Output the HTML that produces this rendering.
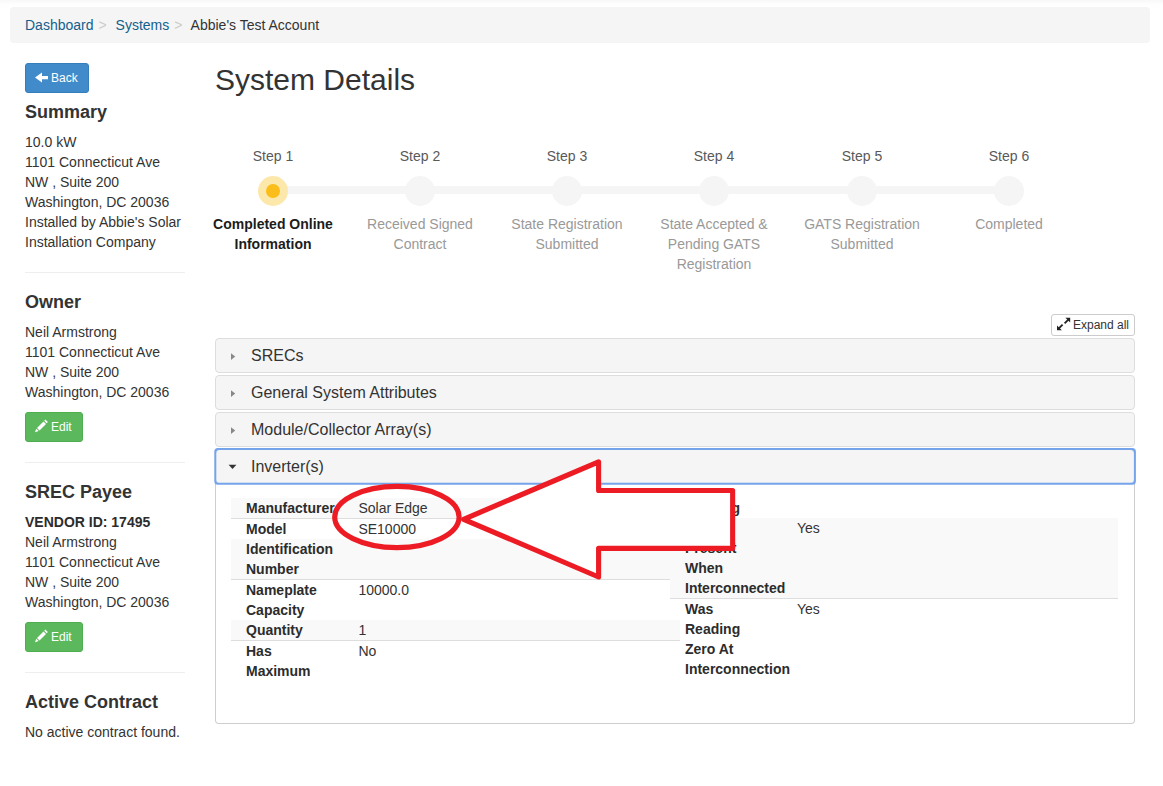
<!DOCTYPE html>
<html>
<head>
<meta charset="utf-8">
<title>System Details</title>
<style>
*{box-sizing:border-box;}
html,body{margin:0;padding:0;}
body{width:1163px;height:786px;overflow:hidden;background:#fff;font-family:"Liberation Sans",sans-serif;font-size:14px;line-height:20px;color:#333;position:relative;}
a{color:#145f8c;text-decoration:none;}
.abs{position:absolute;}
.crumb{left:10px;top:7px;width:1140px;height:36px;background:#f5f5f5;border-radius:4px;padding:8px 15px;white-space:nowrap;}
.crumb .sep{color:#ccc;padding:0 5px;}
.btn{position:absolute;display:block;border-radius:3px;color:#fff;font-size:12px;line-height:18px;padding:5px 10px;border:1px solid transparent;white-space:nowrap;}
.btn-primary{background:#428bca;border-color:#357ebd;}
.btn-success{background:#5cb85c;border-color:#4cae4c;}
.side{left:25px;width:170px;}
h4{margin:0;font-size:18px;line-height:20px;font-weight:bold;color:#333;}
.hr{left:25px;width:160px;height:1px;background:#eee;}
h1{margin:0;font-size:30px;line-height:33px;font-weight:normal;color:#333;}
.step{position:absolute;width:148px;text-align:center;top:146px;}
.step .num{color:#595959;line-height:20px;}
.step .lab{color:#999;line-height:20px;}
.step.act .lab{color:#1c1c1c;font-weight:bold;}
.track{left:273px;top:186px;width:736px;height:8px;background:#f5f5f5;}
.dot{position:absolute;width:30px;height:30px;border-radius:50%;background:#f5f5f5;top:176px;}
.dot.act{background:#fbe8aa;}
.dot.act:after{content:"";position:absolute;left:8px;top:8px;width:14px;height:14px;border-radius:50%;background:#fbbd19;}
.ph{left:215px;width:920px;height:35px;background:#f5f5f5;border:1px solid #ddd;border-radius:4px;font-size:16px;line-height:18px;padding:8px 0 0 35px;color:#333;}
.ph.open{border-color:#7ba8ec;}
.ph.open .ic{left:0;top:0;}
.ic{position:absolute;left:0;top:0;}
.pbody{left:215px;top:484px;width:920px;height:240px;border:1px solid #cecece;border-top:0;border-radius:0 0 4px 4px;background:#fff;}
.row{position:absolute;}
.row.g{background:#f9f9f9;}
.row.bt{border-top:1px solid #ddd;}
.k{position:absolute;font-weight:bold;color:#2c2c2c;white-space:nowrap;}
.v{position:absolute;color:#333;white-space:nowrap;}
</style>
</head>
<body>
<div class="abs" style="left:0;top:0;width:1163px;height:7px;background:linear-gradient(#f8f8f8,#fefefe 60%,#fff);"></div>
<div class="abs crumb"><a>Dashboard</a><span class="sep">&gt;</span> <a>Systems</a><span class="sep">&gt;</span> <span style="color:#333">Abbie's Test Account</span></div>

<div class="btn btn-primary" style="left:25px;top:63px;width:64px;height:30px;"><svg style="position:absolute;left:-1px;top:-1px" width="64" height="30" viewBox="25 63 64 30"><polygon points="35,77.4 42,72.4 42,76 48,76 48,79.2 42,79.2 42,82.4" fill="#fff"/></svg><span style="position:absolute;left:25px;top:5px;">Back</span></div>

<div class="abs side" style="top:102px;"><h4>Summary</h4></div>
<div class="abs side" style="top:132px;">10.0 kW<br>1101 Connecticut Ave<br>NW , Suite 200<br>Washington, DC 20036<br>Installed by Abbie's Solar<br>Installation Company</div>
<div class="abs hr" style="top:272px;"></div>

<div class="abs side" style="top:292px;"><h4>Owner</h4></div>
<div class="abs side" style="top:322px;">Neil Armstrong<br>1101 Connecticut Ave<br>NW , Suite 200<br>Washington, DC 20036</div>
<div class="btn btn-success" style="left:25px;top:412px;width:58px;height:30px;"><svg style="position:absolute;left:-1px;top:-1px" width="58" height="30" viewBox="25 412 58 30"><polygon points="35,432.3 36.3,428.7 38.7,431.1" fill="#fff"/><polygon points="37,427.9 43.5,421.4 46,423.9 39.5,430.4" fill="#fff"/><polygon points="44.2,420.7 45.4,419.5 47.9,422 46.7,423.2" fill="#fff"/></svg><span style="position:absolute;left:25px;top:5px;">Edit</span></div>
<div class="abs hr" style="top:462px;"></div>

<div class="abs side" style="top:482px;"><h4>SREC Payee</h4></div>
<div class="abs side" style="top:512px;"><b style="color:#2c2c2c">VENDOR ID: 17495</b><br>Neil Armstrong<br>1101 Connecticut Ave<br>NW , Suite 200<br>Washington, DC 20036</div>
<div class="btn btn-success" style="left:25px;top:622px;width:58px;height:30px;"><svg style="position:absolute;left:-1px;top:-1px" width="58" height="30" viewBox="25 412 58 30"><polygon points="35,432.3 36.3,428.7 38.7,431.1" fill="#fff"/><polygon points="37,427.9 43.5,421.4 46,423.9 39.5,430.4" fill="#fff"/><polygon points="44.2,420.7 45.4,419.5 47.9,422 46.7,423.2" fill="#fff"/></svg><span style="position:absolute;left:25px;top:5px;">Edit</span></div>
<div class="abs hr" style="top:672px;"></div>

<div class="abs side" style="top:692px;"><h4>Active Contract</h4></div>
<div class="abs side" style="top:722px;">No active contract found.</div>

<div class="abs" style="left:215px;top:63px;"><h1>System Details</h1></div>

<div class="abs track"></div>
<div class="dot act" style="left:258px;"></div>
<div class="dot" style="left:405px;"></div>
<div class="dot" style="left:552px;"></div>
<div class="dot" style="left:699px;"></div>
<div class="dot" style="left:847px;"></div>
<div class="dot" style="left:994px;"></div>

<div class="step act" style="left:199px;"><div class="num">Step 1</div><div class="lab" style="margin-top:48px;">Completed Online<br>Information</div></div>
<div class="step" style="left:346px;"><div class="num">Step 2</div><div class="lab" style="margin-top:48px;">Received Signed<br>Contract</div></div>
<div class="step" style="left:493px;"><div class="num">Step 3</div><div class="lab" style="margin-top:48px;">State Registration<br>Submitted</div></div>
<div class="step" style="left:640px;"><div class="num">Step 4</div><div class="lab" style="margin-top:48px;">State Accepted &amp;<br>Pending GATS<br>Registration</div></div>
<div class="step" style="left:788px;"><div class="num">Step 5</div><div class="lab" style="margin-top:48px;">GATS Registration<br>Submitted</div></div>
<div class="step" style="left:935px;"><div class="num">Step 6</div><div class="lab" style="margin-top:48px;">Completed</div></div>

<div class="abs" style="left:1051px;top:314px;width:84px;height:22px;border:1px solid #ccc;border-radius:3px;background:#fff;font-size:12px;line-height:18px;color:#333;padding:1px 0 0 21px;white-space:nowrap;"><svg style="position:absolute;left:-1px;top:-1px" width="84" height="22" viewBox="1051 314 84 22"><g fill="#222" stroke="none"><polygon points="1070.2,317.8 1065.4,317.8 1070.2,322.6"/><polygon points="1057,330.2 1057,325.4 1061.8,330.2"/></g><g stroke="#222" stroke-width="1.9"><line x1="1068.6" y1="319.4" x2="1064.6" y2="323.4"/><line x1="1058.6" y1="328.6" x2="1062.6" y2="324.6"/></g></svg>Expand all</div>

<div class="abs pbody"></div>
<div class="abs ph" style="top:338px;"><svg class="ic" width="30" height="33" viewBox="0 0 30 33"><polygon points="15,14.2 19.2,17.6 15,21" fill="#888"/></svg>SRECs</div>
<div class="abs ph" style="top:375px;"><svg class="ic" width="30" height="33" viewBox="0 0 30 33"><polygon points="15,14.2 19.2,17.6 15,21" fill="#888"/></svg>General System Attributes</div>
<div class="abs ph" style="top:412px;"><svg class="ic" width="30" height="33" viewBox="0 0 30 33"><polygon points="15,14.2 19.2,17.6 15,21" fill="#888"/></svg>Module/Collector Array(s)</div>
<div class="abs ph open" style="top:449px;"><svg class="ic" width="30" height="33" viewBox="0 0 30 33"><polygon points="12.6,14.8 20.4,14.8 16.5,19.1" fill="#333"/></svg>Inverter(s)</div>

<!-- left table -->
<div class="row g" style="left:231px;top:498px;width:449px;height:20px;"></div>
<div class="row bt" style="left:231px;top:518px;width:449px;height:21px;"></div>
<div class="row g" style="left:231px;top:539px;width:449px;height:40px;"></div>
<div class="row bt" style="left:231px;top:579px;width:449px;height:41px;"></div>
<div class="row g" style="left:231px;top:620px;width:449px;height:20px;"></div>
<div class="row bt" style="left:231px;top:640px;width:449px;height:41px;"></div>

<div class="k" style="left:246px;top:498px;">Manufacturer</div><div class="v" style="left:358.4px;top:498px;">Solar Edge</div>
<div class="k" style="left:246px;top:519px;">Model</div><div class="v" style="left:358.4px;top:519px;">SE10000</div>
<div class="k" style="left:246px;top:539px;">Identification<br>Number</div>
<div class="k" style="left:246px;top:580px;">Nameplate<br>Capacity</div><div class="v" style="left:358.4px;top:580px;">10000.0</div>
<div class="k" style="left:246px;top:620px;">Quantity</div><div class="v" style="left:358.4px;top:620px;">1</div>
<div class="k" style="left:246px;top:641px;">Has<br>Maximum</div><div class="v" style="left:358.4px;top:641px;">No</div>

<!-- right table -->
<div class="row" style="left:670px;top:498px;width:448px;height:20px;background:#fff;"></div>
<div class="row g" style="left:670px;top:518px;width:448px;height:80px;"></div>
<div class="row bt" style="left:670px;top:598px;width:448px;height:81px;"></div>
<div class="k" style="right:423px;top:498px;">Tracking</div>
<div class="k" style="left:685px;top:518px;">Was<br>Present<br>When<br>Interconnected</div><div class="v" style="left:797px;top:518px;">Yes</div>
<div class="k" style="left:685px;top:599px;">Was<br>Reading<br>Zero At<br>Interconnection</div><div class="v" style="left:797px;top:599px;">Yes</div>

<!-- annotation -->
<svg class="abs" style="left:0;top:0;" width="1163" height="786" viewBox="0 0 1163 786">
<rect x="215.3" y="449" width="919.6" height="34.8" rx="2.6" ry="2.6" fill="none" stroke="#75a4eb" stroke-width="2"/>
<polygon points="463.6,519.3 598.6,461.8 598.6,490.5 732.65,490.5 732.65,548.35 598.6,548.35 598.6,577" fill="#fff" stroke="#ed1c24" stroke-width="5.1" stroke-linejoin="round"/>
<ellipse cx="396.9" cy="517" rx="62.2" ry="30.55" fill="none" stroke="#ed1c24" stroke-width="5.2"/>
</svg>
</body>
</html>
